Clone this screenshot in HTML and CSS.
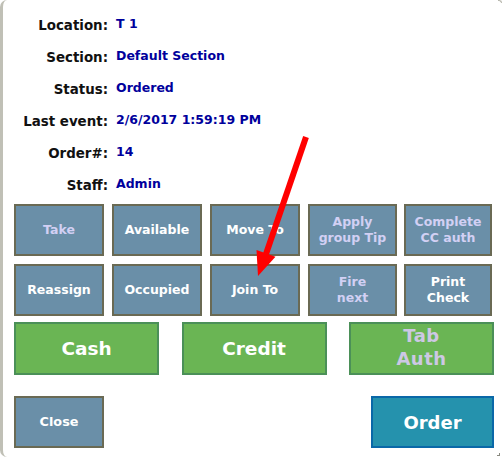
FILE: index.html
```html
<!DOCTYPE html>
<html>
<head>
<meta charset="utf-8">
<link rel="stylesheet" href="styles.css">
</head>
<body>
<div class="panel">
  <div class="info">
    <div class="lbl">Location:</div><div class="val">T 1</div>
    <div class="lbl">Section:</div><div class="val">Default Section</div>
    <div class="lbl">Status:</div><div class="val">Ordered</div>
    <div class="lbl">Last event:</div><div class="val">2/6/2017 1:59:19 PM</div>
    <div class="lbl">Order#:</div><div class="val">14</div>
    <div class="lbl">Staff:</div><div class="val">Admin</div>
  </div>
  <div class="actions">
    <div class="btn off">Take</div>
    <div class="btn">Available</div>
    <div class="btn">Move To</div>
    <div class="btn off">Apply<br>group Tip</div>
    <div class="btn off">Complete<br>CC auth</div>
    <div class="btn">Reassign</div>
    <div class="btn">Occupied</div>
    <div class="btn">Join To</div>
    <div class="btn off">Fire<br>next</div>
    <div class="btn">Print<br>Check</div>
  </div>
  <div class="pay">
    <div class="gbtn">Cash</div>
    <div class="gbtn">Credit</div>
    <div class="gbtn off tab">Tab<br>Auth</div>
  </div>
  <div class="bottom">
    <div class="btn close">Close</div>
    <div class="order">Order</div>
  </div>
  <div class="corner-tr"></div>
  <div class="corner-br"></div>
</div>
<svg class="arrow" width="502" height="457" viewBox="0 0 502 457">
  <line x1="306" y1="137" x2="266" y2="254" stroke="#ff0000" stroke-width="6"/>
  <polygon points="258,276 256.5,250 275.5,256.7" fill="#ff0000"/>
</svg>
</body>
</html>
```
FILE: styles.css
```css
html, body {
  margin: 0;
  padding: 0;
  background: #ffffff;
}
body {
  width: 502px;
  height: 457px;
  overflow: hidden;
  position: relative;
  font-family: "DejaVu Sans", Verdana, sans-serif;
  font-weight: bold;
}
.panel {
  position: relative;
  box-sizing: border-box;
  height: 457px;
  border-left: 3px solid #c0c0b6;
  border-radius: 7px 0 0 7px;
  padding: 9px 0 0 11px;
}
.info {
  display: grid;
  grid-template-columns: 105px auto;
  grid-auto-rows: 32px;
  column-gap: 8px;
  align-items: center;
  margin-left: -11px;
}
.lbl {
  text-align: right;
  font-size: 13.4px;
  color: #111111;
  white-space: nowrap;
}
.val {
  font-size: 12.5px;
  color: #00009c;
  margin-bottom: 3px;
  white-space: nowrap;
}
.actions {
  margin-top: 3px;
  display: grid;
  grid-template-columns: 90px 90px 90px 89px 87px;
  grid-auto-rows: 52px;
  column-gap: 8px;
  row-gap: 8px;
}
.actions .btn:nth-child(5),
.actions .btn:nth-child(10) {
  margin-left: -1px;
}
.btn {
  box-sizing: border-box;
  background: #6a8fa8;
  border: 2px solid #6a6a54;
  color: #ffffff;
  font-size: 12.5px;
  line-height: 16px;
  display: flex;
  align-items: center;
  justify-content: center;
  text-align: center;
}
.btn.off {
  color: #d2d0f4;
}
.pay {
  margin-top: 6px;
  width: 480px;
  display: flex;
  justify-content: space-between;
}
.gbtn {
  box-sizing: border-box;
  width: 145px;
  height: 53px;
  background: #6ab554;
  border: 2px solid #4b9058;
  color: #ffffff;
  font-size: 18.5px;
  display: flex;
  align-items: center;
  justify-content: center;
  text-align: center;
}
.gbtn.tab {
  font-size: 18px;
  line-height: 23px;
  color: #cdc8e4;
  letter-spacing: 0.5px;
  padding-bottom: 3px;
}
.bottom {
  margin-top: 21px;
  width: 480px;
  display: flex;
  justify-content: space-between;
}
.btn.close {
  width: 90px;
  height: 52px;
  font-size: 12.8px;
}
.order {
  box-sizing: border-box;
  width: 123px;
  height: 52px;
  background: #2592ad;
  border: 2px solid #0a68a8;
  color: #ffffff;
  font-size: 18px;
  display: flex;
  align-items: center;
  justify-content: center;
}
.corner-tr {
  position: absolute;
  right: 0;
  top: 0;
  width: 4px;
  height: 3px;
  border-top: 1px solid #b8b8ae;
  border-right: 1px solid #b8b8ae;
  border-radius: 0 4px 0 0;
  box-sizing: border-box;
}
.corner-br {
  position: absolute;
  right: 2px;
  bottom: 1px;
  width: 3px;
  height: 3px;
  border-bottom: 1px solid #8a8a80;
  border-right: 1px solid #8a8a80;
  box-sizing: border-box;
}
.arrow {
  position: absolute;
  left: 0;
  top: 0;
  pointer-events: none;
}
```
